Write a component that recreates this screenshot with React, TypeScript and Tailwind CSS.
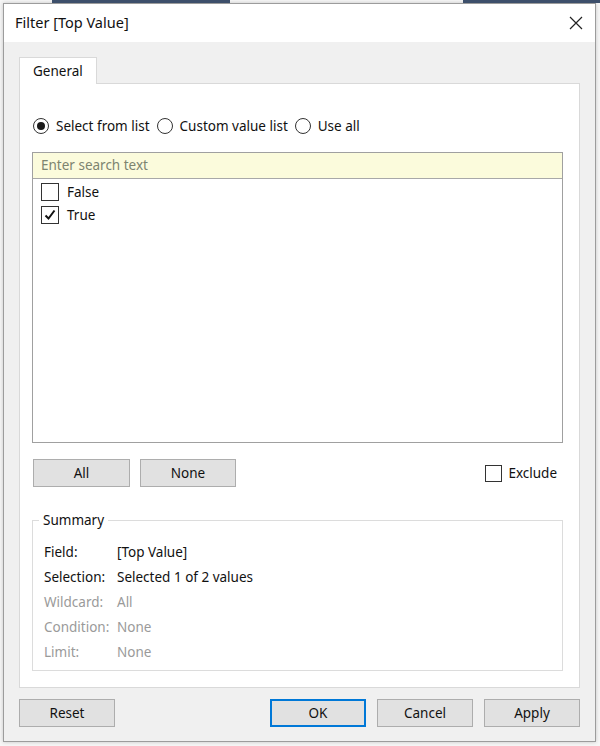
import React from "react";

const font = { fontFamily: '"Noto Sans", "Open Sans", Arial, sans-serif' };

function Radio({ checked }: { checked?: boolean }) {
  return (
    <span className="flex h-[16px] w-[16px] shrink-0 items-center justify-center rounded-full border border-[#333333] bg-white">
      {checked && <span className="h-[8px] w-[8px] rounded-full bg-[#1a1a1a]" />}
    </span>
  );
}

function Check({ checked }: { checked?: boolean }) {
  return (
    <span className="flex h-[18px] w-[18px] shrink-0 items-center justify-center border border-[#333333] bg-white">
      {checked && (
        <svg width="14" height="14" viewBox="0 0 14 14">
          <polyline points="2.5,7.5 5.5,10.5 11.5,2.5" fill="none" stroke="#111" strokeWidth="2" />
        </svg>
      )}
    </span>
  );
}

function Btn({ label, primary, w = "w-[96px]" }: { label: string; primary?: boolean; w?: string }) {
  return (
    <div
      className={`flex h-[28px] ${w} items-center justify-center bg-[#e1e1e1] text-[13.5px] text-[#111] ${
        primary ? "border-2 border-[#0078d7]" : "border border-[#adadad]"
      }`}
    >
      {label}
    </div>
  );
}

function Row({ k, v, dim }: { k: string; v: string; dim?: boolean }) {
  return (
    <div className={`flex h-[25px] items-center text-[13.5px] ${dim ? "text-[#9a9a9a]" : "text-[#111]"}`}>
      <span className="w-[73px]">{k}</span>
      <span>{v}</span>
    </div>
  );
}

export default function App() {
  return (
    <div className="h-[746px] w-[600px] overflow-hidden bg-[#f6f6f6]" style={font}>
      {/* window strip peeking above the dialog */}
      <div className="flex h-[3px]">
        <div className="w-[52px]" />
        <div className="w-[178px] bg-[#3d4f6b]" />
        <div className="flex-1" />
        <div className="w-[137px] bg-[#3d4f6b]" />
      </div>
      <div className="ml-[3px] flex h-[739px] w-[593px] flex-col border border-[#9c9c9c] bg-[#f0f0f0] shadow-[0_0_4px_rgba(0,0,0,0.2)]">
        {/* title bar */}
        <div className="flex h-[38px] shrink-0 items-center justify-between bg-white pl-[11px] pr-[12px]">
          <span className="text-[14.5px] text-[#111]">Filter [Top Value]</span>
          <svg width="14" height="14" viewBox="0 0 14 14">
            <path d="M1 1 L13 13 M13 1 L1 13" stroke="#222" strokeWidth="1.2" />
          </svg>
        </div>

        {/* tab strip */}
        <div className="mt-[15px] flex px-[15px]">
          <div className="relative z-10 -mb-px flex h-[27px] w-[78px] items-center border border-b-0 border-[#d9d9d9] bg-white pl-[13px] text-[13.5px] text-[#111]">
            General
          </div>
        </div>

        {/* tab page */}
        <div className="mx-[15px] flex h-[605px] flex-col border border-[#d9d9d9] bg-white px-[12px]">
          <div className="mt-[33px] flex h-[18px] items-center gap-[7px] pl-[1px] text-[13.5px] text-[#111]">
            <Radio checked />
            <span>Select from list</span>
            <Radio />
            <span>Custom value list</span>
            <Radio />
            <span>Use all</span>
          </div>

          <div className="mt-[17px] flex h-[291px] w-[531px] flex-col border border-[#a0a0a0]">
            <div className="flex h-[26px] items-center border-b border-[#a8a8a8] bg-[#fbfbdc] pl-[8px] text-[13.5px] text-[#7d8470]">
              Enter search text
            </div>
            <div className="flex flex-col gap-[5px] pl-[8px] pt-[4px] text-[13.5px] text-[#111]">
              <div className="flex h-[18px] items-center gap-[8px]">
                <Check />
                <span>False</span>
              </div>
              <div className="flex h-[18px] items-center gap-[8px]">
                <Check checked />
                <span>True</span>
              </div>
            </div>
          </div>

          <div className="mt-[16px] flex w-[531px] items-center pl-[1px]">
            <Btn label="All" w="w-[97px]" />
            <div className="w-[10px]" />
            <Btn label="None" w="w-[96px]" />
            <div className="flex-1" />
            <div className="mr-[6px] flex items-center gap-[6px] text-[13.5px] text-[#111]">
              <span className="h-[17px] w-[17px] border border-[#333333] bg-white" />
              <span>Exclude</span>
            </div>
          </div>

          <div className="relative mt-[33px] h-[151px] w-[531px] border border-[#dcdcdc] pl-[11px] pt-[19px]">
            <span className="absolute -top-[11px] left-[6px] bg-white px-[4px] text-[13.5px] text-[#111]">Summary</span>
            <Row k="Field:" v="[Top Value]" />
            <Row k="Selection:" v="Selected 1 of 2 values" />
            <Row k="Wildcard:" v="All" dim />
            <Row k="Condition:" v="None" dim />
            <Row k="Limit:" v="None" dim />
          </div>
        </div>

        {/* dialog buttons */}
        <div className="mt-[11px] flex px-[15px]">
          <Btn label="Reset" />
          <div className="flex-1" />
          <div className="flex gap-[11px]">
            <Btn label="OK" primary />
            <Btn label="Cancel" />
            <Btn label="Apply" />
          </div>
        </div>
      </div>
    </div>
  );
}
